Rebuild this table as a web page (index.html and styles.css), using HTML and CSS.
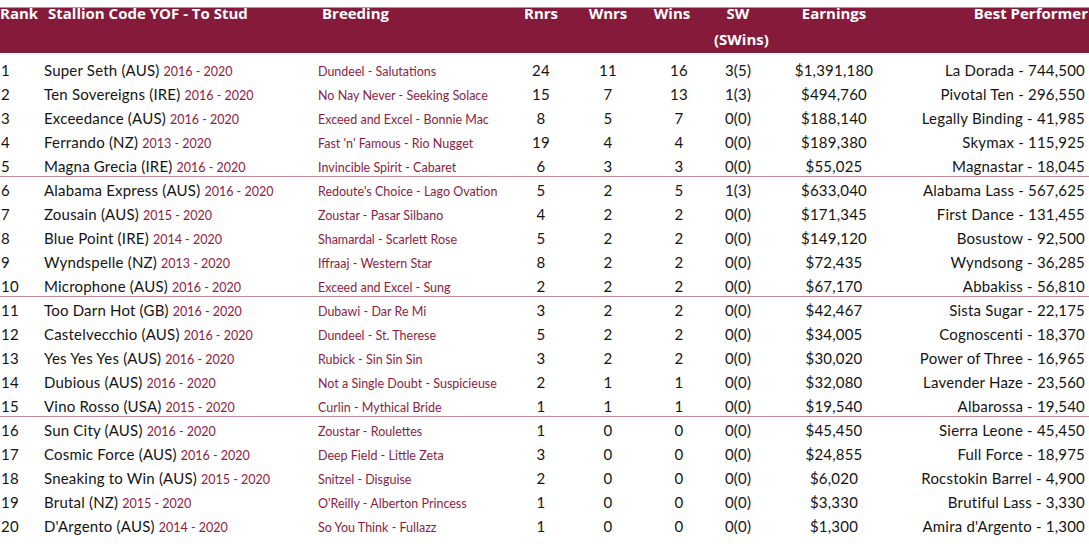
FILE: index.html
```html
<!DOCTYPE html>
<html lang="en">
<head>
<meta charset="utf-8">
<title>Stallion Table</title>
<link rel="stylesheet" href="styles.css">
</head>
<body>
<div class="table">
  <div class="head">
    <div class="hc c-rank">Rank</div>
    <div class="hc c-stal pad">Stallion Code YOF - To Stud</div>
    <div class="hc h-breed pad">Breeding</div>
    <div class="hc c-num">Rnrs</div>
    <div class="hc c-num">Wnrs</div>
    <div class="hc c-num wins-h">Wins</div>
    <div class="hc c-num">SW<br>(SWins)</div>
    <div class="hc c-num">Earnings</div>
    <div class="hc c-best">Best Performer</div>
  </div>
  <div class="rows">
    <div class="row"><div class="c-rank">1</div><div class="c-stal">Super Seth (AUS) <span class="yr">2016 - 2020</span></div><div class="c-breed">Dundeel - Salutations</div><div class="c-num">24</div><div class="c-num">11</div><div class="c-num">16</div><div class="c-num">3(5)</div><div class="c-num">$1,391,180</div><div class="c-best">La Dorada - 744,500</div></div>
    <div class="row"><div class="c-rank">2</div><div class="c-stal">Ten Sovereigns (IRE) <span class="yr">2016 - 2020</span></div><div class="c-breed">No Nay Never - Seeking Solace</div><div class="c-num">15</div><div class="c-num">7</div><div class="c-num">13</div><div class="c-num">1(3)</div><div class="c-num">$494,760</div><div class="c-best">Pivotal Ten - 296,550</div></div>
    <div class="row"><div class="c-rank">3</div><div class="c-stal">Exceedance (AUS) <span class="yr">2016 - 2020</span></div><div class="c-breed">Exceed and Excel - Bonnie Mac</div><div class="c-num">8</div><div class="c-num">5</div><div class="c-num">7</div><div class="c-num">0(0)</div><div class="c-num">$188,140</div><div class="c-best">Legally Binding - 41,985</div></div>
    <div class="row"><div class="c-rank">4</div><div class="c-stal">Ferrando (NZ) <span class="yr">2013 - 2020</span></div><div class="c-breed">Fast 'n' Famous - Rio Nugget</div><div class="c-num">19</div><div class="c-num">4</div><div class="c-num">4</div><div class="c-num">0(0)</div><div class="c-num">$189,380</div><div class="c-best">Skymax - 115,925</div></div>
    <div class="row sep"><div class="c-rank">5</div><div class="c-stal">Magna Grecia (IRE) <span class="yr">2016 - 2020</span></div><div class="c-breed">Invincible Spirit - Cabaret</div><div class="c-num">6</div><div class="c-num">3</div><div class="c-num">3</div><div class="c-num">0(0)</div><div class="c-num">$55,025</div><div class="c-best">Magnastar - 18,045</div></div>
    <div class="row"><div class="c-rank">6</div><div class="c-stal">Alabama Express (AUS) <span class="yr">2016 - 2020</span></div><div class="c-breed">Redoute's Choice - Lago Ovation</div><div class="c-num">5</div><div class="c-num">2</div><div class="c-num">5</div><div class="c-num">1(3)</div><div class="c-num">$633,040</div><div class="c-best">Alabama Lass - 567,625</div></div>
    <div class="row"><div class="c-rank">7</div><div class="c-stal">Zousain (AUS) <span class="yr">2015 - 2020</span></div><div class="c-breed">Zoustar - Pasar Silbano</div><div class="c-num">4</div><div class="c-num">2</div><div class="c-num">2</div><div class="c-num">0(0)</div><div class="c-num">$171,345</div><div class="c-best">First Dance - 131,455</div></div>
    <div class="row"><div class="c-rank">8</div><div class="c-stal">Blue Point (IRE) <span class="yr">2014 - 2020</span></div><div class="c-breed">Shamardal - Scarlett Rose</div><div class="c-num">5</div><div class="c-num">2</div><div class="c-num">2</div><div class="c-num">0(0)</div><div class="c-num">$149,120</div><div class="c-best">Bosustow - 92,500</div></div>
    <div class="row"><div class="c-rank">9</div><div class="c-stal">Wyndspelle (NZ) <span class="yr">2013 - 2020</span></div><div class="c-breed">Iffraaj - Western Star</div><div class="c-num">8</div><div class="c-num">2</div><div class="c-num">2</div><div class="c-num">0(0)</div><div class="c-num">$72,435</div><div class="c-best">Wyndsong - 36,285</div></div>
    <div class="row sep"><div class="c-rank">10</div><div class="c-stal">Microphone (AUS) <span class="yr">2016 - 2020</span></div><div class="c-breed">Exceed and Excel - Sung</div><div class="c-num">2</div><div class="c-num">2</div><div class="c-num">2</div><div class="c-num">0(0)</div><div class="c-num">$67,170</div><div class="c-best">Abbakiss - 56,810</div></div>
    <div class="row"><div class="c-rank">11</div><div class="c-stal">Too Darn Hot (GB) <span class="yr">2016 - 2020</span></div><div class="c-breed">Dubawi - Dar Re Mi</div><div class="c-num">3</div><div class="c-num">2</div><div class="c-num">2</div><div class="c-num">0(0)</div><div class="c-num">$42,467</div><div class="c-best">Sista Sugar - 22,175</div></div>
    <div class="row"><div class="c-rank">12</div><div class="c-stal">Castelvecchio (AUS) <span class="yr">2016 - 2020</span></div><div class="c-breed">Dundeel - St. Therese</div><div class="c-num">5</div><div class="c-num">2</div><div class="c-num">2</div><div class="c-num">0(0)</div><div class="c-num">$34,005</div><div class="c-best">Cognoscenti - 18,370</div></div>
    <div class="row"><div class="c-rank">13</div><div class="c-stal">Yes Yes Yes (AUS) <span class="yr">2016 - 2020</span></div><div class="c-breed">Rubick - Sin Sin Sin</div><div class="c-num">3</div><div class="c-num">2</div><div class="c-num">2</div><div class="c-num">0(0)</div><div class="c-num">$30,020</div><div class="c-best">Power of Three - 16,965</div></div>
    <div class="row"><div class="c-rank">14</div><div class="c-stal">Dubious (AUS) <span class="yr">2016 - 2020</span></div><div class="c-breed">Not a Single Doubt - Suspicieuse</div><div class="c-num">2</div><div class="c-num">1</div><div class="c-num">1</div><div class="c-num">0(0)</div><div class="c-num">$32,080</div><div class="c-best">Lavender Haze - 23,560</div></div>
    <div class="row sep"><div class="c-rank">15</div><div class="c-stal">Vino Rosso (USA) <span class="yr">2015 - 2020</span></div><div class="c-breed">Curlin - Mythical Bride</div><div class="c-num">1</div><div class="c-num">1</div><div class="c-num">1</div><div class="c-num">0(0)</div><div class="c-num">$19,540</div><div class="c-best">Albarossa - 19,540</div></div>
    <div class="row"><div class="c-rank">16</div><div class="c-stal">Sun City (AUS) <span class="yr">2016 - 2020</span></div><div class="c-breed">Zoustar - Roulettes</div><div class="c-num">1</div><div class="c-num">0</div><div class="c-num">0</div><div class="c-num">0(0)</div><div class="c-num">$45,450</div><div class="c-best">Sierra Leone - 45,450</div></div>
    <div class="row"><div class="c-rank">17</div><div class="c-stal">Cosmic Force (AUS) <span class="yr">2016 - 2020</span></div><div class="c-breed">Deep Field - Little Zeta</div><div class="c-num">3</div><div class="c-num">0</div><div class="c-num">0</div><div class="c-num">0(0)</div><div class="c-num">$24,855</div><div class="c-best">Full Force - 18,975</div></div>
    <div class="row"><div class="c-rank">18</div><div class="c-stal">Sneaking to Win (AUS) <span class="yr">2015 - 2020</span></div><div class="c-breed">Snitzel - Disguise</div><div class="c-num">2</div><div class="c-num">0</div><div class="c-num">0</div><div class="c-num">0(0)</div><div class="c-num">$6,020</div><div class="c-best">Rocstokin Barrel - 4,900</div></div>
    <div class="row"><div class="c-rank">19</div><div class="c-stal">Brutal (NZ) <span class="yr">2015 - 2020</span></div><div class="c-breed">O'Reilly - Alberton Princess</div><div class="c-num">1</div><div class="c-num">0</div><div class="c-num">0</div><div class="c-num">0(0)</div><div class="c-num">$3,330</div><div class="c-best">Brutiful Lass - 3,330</div></div>
    <div class="row"><div class="c-rank">20</div><div class="c-stal">D'Argento (AUS) <span class="yr">2014 - 2020</span></div><div class="c-breed">So You Think - Fullazz</div><div class="c-num">1</div><div class="c-num">0</div><div class="c-num">0</div><div class="c-num">0(0)</div><div class="c-num">$1,300</div><div class="c-best">Amira d'Argento - 1,300</div></div>
  </div>
</div>
</body>
</html>
```

FILE: styles.css
```css
* { box-sizing: border-box; }
html, body { margin: 0; padding: 0; background: #ffffff; }
body {
  font-family: "Lato", "Noto Sans", "Liberation Sans", sans-serif;
  color: #141414;
  padding-top: 7px;
}
.table { width: 1089px; }
.head, .row {
  display: grid;
  grid-template-columns: 44px 274px 192px 62px 72px 70px 48px 144px 179px;
}
.head {
  height: 46px;
  background: #861a3a;
  border-top: 1px solid #c78a9b;
  color: #ffffff;
  font-family: "Open Sans", "Lato", sans-serif;
  font-weight: 700;
  font-size: 15px;
}
.hc {
  line-height: 26px;
  margin-top: -8px;
  white-space: nowrap;
}
.hc.pad { padding-left: 4px; }
.hc.c-rank { padding-left: 0; }
.hc.c-best { margin-right: -3px; }
.hc.wins-h { padding-right: 14px; }
.rows { padding-top: 5px; }
.row {
  height: 24px;
  line-height: 24px;
  font-size: 15px;
  letter-spacing: 0.2px;
  white-space: nowrap;
  align-items: baseline;
}
.row.sep {
  background-image: linear-gradient(to top, transparent 1px, #c98a9c 1px, #c98a9c 2px, transparent 2px);
}
.c-rank { padding-left: 1px; }
.c-num { text-align: center; }
.c-best { text-align: right; }
.yr { font-size: 12.5px; color: #8b1d42; letter-spacing: 0; }
.c-breed { font-size: 12.5px; color: #8b1d42; letter-spacing: 0; }
```
